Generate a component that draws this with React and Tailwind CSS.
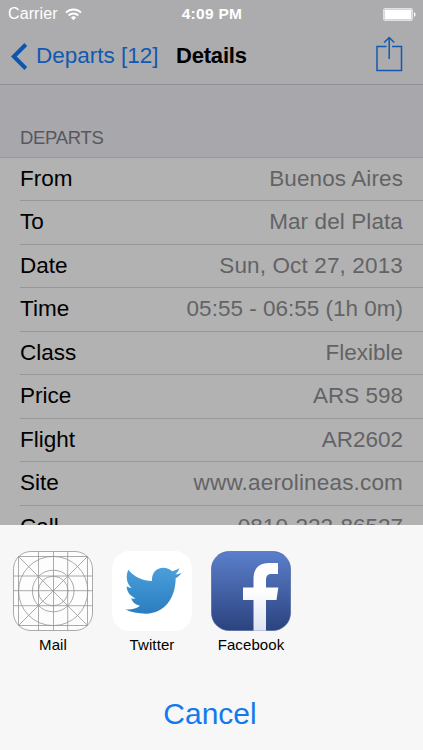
import clsx from 'clsx';

const rows = [
    { label: 'From', value: 'Buenos Aires', tracking: 'tracking-[0.1px]' },
    { label: 'To', value: 'Mar del Plata', tracking: 'tracking-[0.1px]' },
    { label: 'Date', value: 'Sun, Oct 27, 2013', tracking: 'tracking-[0.14px]' },
    { label: 'Time', value: '05:55 - 06:55 (1h 0m)' },
    { label: 'Class', value: 'Flexible' },
    { label: 'Price', value: 'ARS 598' },
    { label: 'Flight', value: 'AR2602' },
    { label: 'Site', value: 'www.aerolineas.com', tracking: 'tracking-[0.17px]' },
    { label: 'Call', value: '0810-222-86527' },
];

function WifiIcon() {
    return (
        <svg width="17" height="13" viewBox="0 0 17 13" fill="none" stroke="white" strokeWidth="2">
            <path d="M1 4.6a10.6 10.6 0 0 1 15 0" />
            <path d="M3.7 7.5a6.8 6.8 0 0 1 9.6 0" />
            <path d="M8.5 12.2 5.9 9.6a3.7 3.7 0 0 1 5.2 0z" fill="white" stroke="none" />
        </svg>
    );
}

function StatusBar() {
    return (
        <div className="grid h-7 grid-cols-3 items-center pl-2 pr-[7px] text-[15.5px] text-white">
            <div className="flex items-center gap-[7px]">
                <span className="text-base tracking-[0.1px]">Carrier</span>
                <WifiIcon />
            </div>
            <span className="text-center font-bold tracking-[0.3px]">4:09 PM</span>
            <svg className="justify-self-end" width="33" height="13" viewBox="0 0 33 13">
                <rect x="0.5" y="0.5" width="29" height="12" rx="1.5" fill="#c8c8ca" stroke="#e0e0e2" />
                <rect x="1.7" y="1.7" width="26.6" height="9.6" rx="0.5" fill="white" />
                <path d="M31 4.3c2 .3 2 4.1 0 4.4z" fill="white" />
            </svg>
        </div>
    );
}

function NavBar() {
    return (
        <div className="flex h-[57px] items-center border-b border-[#929294] pl-[11px] pr-[20px]">
            <svg width="17" height="27" viewBox="0 0 17 27" fill="none" stroke="#0a56b0" strokeWidth="4">
                <path d="M14.8 1.5 2.8 13.5l12 12" />
            </svg>
            <span className="ml-2 w-[140px] whitespace-nowrap text-[22.5px] text-[#1159b0]">Departs [12]</span>
            <h1 className="-mt-px whitespace-nowrap text-[22px] font-bold tracking-[-0.2px] text-black">Details</h1>
            <svg className="-mt-1 ml-auto" width="27" height="36" viewBox="0 0 27 36" fill="none" stroke="#1159b0" strokeWidth="1.5">
                <path d="M10.5 10.5H1v24h24.5v-24H16" />
                <path d="M13.2 23V1.500M8.2 6.500l5-5 5 5" />
            </svg>
        </div>
    );
}

function MailIcon() {
    return (
        <svg width="80" height="80" viewBox="0 0 80 80" fill="none" stroke="#969698" strokeWidth="0.8">
            <rect x="0.5" y="0.5" width="79" height="79" rx="17.5" fill="#fdfdfd" />
            <path d="M5.500 5.500v69M25.500.5v79M40.500.5v79M54.700.5v79M74.500 5.500v69" />
            <path d="M5.500 5.500h69M.5 25h79M.5 39.700h79M.5 54.700h79M5.500 74.500h69" />
            <path d="m5.500 5.500 69 69M74.500 5.500l-69 69" />
            <circle cx="40.2" cy="40" r="34.6" />
            <circle cx="40.2" cy="40" r="20.8" />
            <circle cx="40.2" cy="40" r="14.8" />
        </svg>
    );
}

function TwitterIcon() {
    return (
        <svg width="80" height="80" viewBox="0 0 80 80">
            <defs>
                <linearGradient id="bird" x1="0" y1="0" x2="0" y2="1">
                    <stop offset="0" stopColor="#4a9fdb" />
                    <stop offset="1" stopColor="#2b7dbf" />
                </linearGradient>
            </defs>
            <rect width="80" height="80" rx="18" fill="white" />
            <path
                transform="translate(8 9) scale(0.3333)"
                fill="url(#bird)"
                d="M25 29C42 51 68 62 96 63C94 38 110 23 130 23C141 23 149 27 156 34C164 33 171 29 178 25C176 33 172 38 166 43C172 43 178 41 184 39C180 46 174 51 167 55C167 113 134 161 78 161C54 161 32 157 15 148C33 150 49 146 60 137C47 135 37 127 34 115C38 117 42 117 47 115C31 109 20 96 20 79C25 82 30 84 35 84C20 71 16 49 25 29Z"
            />
        </svg>
    );
}

function FacebookIcon() {
    return (
        <svg width="80" height="80" viewBox="0 0 80 80">
            <defs>
                <linearGradient id="fbTile" x1="0" y1="0" x2="0" y2="1">
                    <stop offset="0" stopColor="#5b7fcb" />
                    <stop offset="1" stopColor="#2b437f" />
                </linearGradient>
                <linearGradient id="fbMark" x1="0" y1="0" x2="0" y2="1">
                    <stop offset="0.4" stopColor="#ffffff" />
                    <stop offset="1" stopColor="#dce2f0" />
                </linearGradient>
            </defs>
            <rect x="0.5" y="0.5" width="79" height="79" rx="17.5" fill="url(#fbTile)" stroke="#3e5797" strokeWidth="0.6" />
            <path
                fill="url(#fbMark)"
                d="M42.500 79.700V49H32V36.600h10.500V28c0-10.500 5.500-16 15.500-16h9v11h-6c-4.500 0-6 1.900-6 6.400v7.200h12.300L65.500 49H55v30.700z"
            />
        </svg>
    );
}

const actions = [
    { name: 'Mail', Icon: MailIcon },
    { name: 'Twitter', Icon: TwitterIcon },
    { name: 'Facebook', Icon: FacebookIcon },
];

function ShareSheet() {
    return (
        <div className="flex h-[225px] shrink-0 flex-col bg-[#f7f7f8]">
            <div className="flex gap-[19px] pl-[13px] pt-[26px]">
                {actions.map(({ name, Icon }) => (
                    <div key={name} className="flex w-20 flex-col items-center gap-1">
                        <Icon />
                        <span className="text-[15px] leading-[19px] tracking-[0.1px] text-black">{name}</span>
                    </div>
                ))}
            </div>
            <button className="mt-[41px] self-center pr-[3px] text-[30px] leading-[38px] text-[#147aec]">Cancel</button>
        </div>
    );
}

export default function App() {
    return (
        <div className="flex h-[750px] w-[423px] flex-col overflow-hidden bg-[#b2b2b2] font-['Liberation_Sans',Arial,sans-serif]">
            <div className="h-[85px] shrink-0 bg-[#acacae]">
                <StatusBar />
                <NavBar />
            </div>
            <div className="h-[72.5px] shrink-0 border-b border-[#99999c] bg-[#a7a7ac] pl-5 pt-[42px] text-[18.5px] leading-[22px] tracking-[-0.3px] text-[#58585c]">
                DEPARTS
            </div>
            <div className="min-h-0 flex-1 overflow-hidden">
                {rows.map((row, i) => (
                    <div
                        key={row.label}
                        className={clsx(
                            'ml-5 flex h-[43.5px] items-center justify-between pr-[20px] text-[22.5px]',
                            i < rows.length - 1 && 'border-b border-[#98989b]'
                        )}
                    >
                        <span className="text-black">{row.label}</span>
                        <span className={clsx('text-[#636366]', row.tracking)}>{row.value}</span>
                    </div>
                ))}
            </div>
            <ShareSheet />
        </div>
    );
}
